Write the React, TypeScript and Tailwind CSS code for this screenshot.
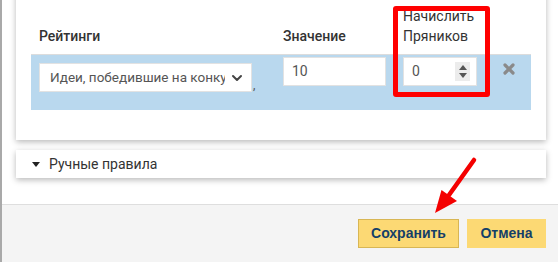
import { ChevronDown } from "lucide-react";

const body = { fontFamily: "Roboto, 'Liberation Sans', Arial, sans-serif" };

function Spinner() {
  return (
    <div className="flex h-[19px] w-[15px] flex-col items-center justify-center gap-[3px] bg-[#ececec]">
      <div className="h-0 w-0 border-x-[4px] border-b-[5px] border-x-transparent border-b-[#555]" />
      <div className="h-0 w-0 border-x-[4px] border-t-[5px] border-x-transparent border-t-[#555]" />
    </div>
  );
}

function RatingRow() {
  return (
    <div className="flex h-[56px] items-start border-t border-[#dcdcdc] bg-[#b9d8ee]">
      <div className="flex w-[252px] items-end pl-[8px] pt-[8px]">
        <div className="flex h-[29px] w-[213px] items-center overflow-hidden border border-[#e2e2e2] bg-white pl-[10px] pr-[6px]">
          <span className="flex-1 overflow-hidden whitespace-nowrap text-[13.5px] text-[#555]">
            Идеи, победившие на конкурсе
          </span>
          <ChevronDown size={16} strokeWidth={3} className="ml-[4px] shrink-0 text-[#444]" />
        </div>
        <span className="ml-[1px] text-[12px] leading-[14px] text-[#555]">,</span>
      </div>
      <div className="w-[120px] pt-[2px]">
        <div className="flex h-[29px] w-[103px] items-center border border-[#e2e2e2] bg-white pl-[8px] text-[14px] text-[#555]">
          10
        </div>
      </div>
      <div className="w-[100px] pt-[2px]">
        <div className="flex h-[29px] w-[74px] items-center justify-between border border-[#e2e2e2] bg-white pl-[8px] pr-[6px] text-[14px] text-[#555]">
          0
          <Spinner />
        </div>
      </div>
      <div className="pt-[8px]">
        <svg width="12" height="12" viewBox="0 0 12 12">
          <path d="M2 2 L10 10 M10 2 L2 10" stroke="#8a8a8a" strokeWidth="3.2" strokeLinecap="round" />
        </svg>
      </div>
    </div>
  );
}

export default function App() {
  return (
    <div className="relative h-[262px] w-[558px] overflow-hidden border-l-2 border-[#a9a9a9] bg-white" style={body}>
      <div className="bg-white pb-[26px] pl-[14px] pr-[12px]">
        <div className="-mt-[10px] bg-white px-[15px] pb-[30px] pt-[16px] shadow-[0_2px_6px_rgba(0,0,0,0.28)]">
          <div className="flex items-end pb-[8px] text-[14px] leading-[20px] text-[#333]">
            <div className="w-[252px] pl-[8px] font-medium">Рейтинги</div>
            <div className="w-[120px] font-medium">Значение</div>
            <div className="w-[100px]">
              Начислить
              <br />
              Пряников
            </div>
          </div>
          <RatingRow />
        </div>
        <div className="mt-[10px] flex h-[28px] items-center bg-white pl-[16px] text-[14px] text-[#333] shadow-[0_2px_6px_rgba(0,0,0,0.28)]">
          <div className="mr-[9px] h-0 w-0 border-x-[4px] border-t-[5px] border-x-transparent border-t-[#222]" />
          Ручные правила
        </div>
      </div>
      <div
        className="flex h-[58px] items-start justify-end gap-[8px] border-t border-[#dedede] bg-[#f4f4f4] pr-[12px] pt-[14px] text-[14px] font-bold text-[#143f68]"
        style={{ fontFamily: "'Liberation Sans', Arial, sans-serif" }}
      >
        <button className="h-[29px] w-[101px] border border-[#d8b654] bg-[#fcd974]">Сохранить</button>
        <button className="h-[29px] w-[79px] bg-[#fcd974]">Отмена</button>
      </div>

      <div className="absolute left-[391px] top-[6px] h-[91px] w-[97px] rounded-[3px] border-[5px] border-[#ff0000]" />
      <svg className="absolute left-0 top-0" width="558" height="262" viewBox="0 0 558 262">
        <line x1="472" y1="160" x2="447" y2="195" stroke="#f40000" strokeWidth="4.5" strokeLinecap="round" />
        <polygon points="433,213 439.5,190 455,201" fill="#f40000" />
      </svg>
    </div>
  );
}
